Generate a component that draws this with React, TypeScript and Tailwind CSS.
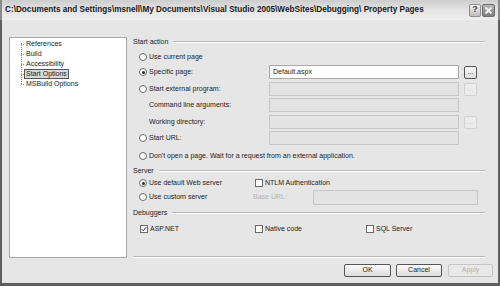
import React from "react";

function Radio({ checked }: { checked?: boolean }) {
  return (
    <span className="w-[8px] h-[8px] shrink-0 rounded-full border border-[#6a6a6a] bg-white flex items-center justify-center">
      {checked && <span className="w-[3px] h-[3px] rounded-full bg-[#2a2a2a]" />}
    </span>
  );
}

function Check({ checked }: { checked?: boolean }) {
  return (
    <span className="w-[8px] h-[8px] shrink-0 border border-[#6a6a6a] bg-white flex items-center justify-center">
      {checked && (
        <svg width="6" height="6" viewBox="0 0 6 6">
          <path d="M0.8 3.2 L2.3 4.7 L5.2 1.2" stroke="#222" strokeWidth="1" fill="none" />
        </svg>
      )}
    </span>
  );
}

function Field({ enabled, text, w = "w-[190px]" }: { enabled?: boolean; text?: string; w?: string }) {
  return (
    <div
      className={
        "h-[14px] flex items-center pl-[3px] " +
        w +
        (enabled ? " bg-white border border-[#a8a8a8]" : " bg-[#e3e3e3] border border-[#c6c6c6]")
      }
    >
      {text}
    </div>
  );
}

function Dots({ enabled }: { enabled?: boolean }) {
  return (
    <div
      className={
        "ml-[5px] w-[13px] h-[13px] rounded-[2px] flex items-end justify-center leading-none pb-[3px] " +
        (enabled
          ? "border border-[#555] bg-gradient-to-b from-[#fafafa] to-[#dedede] text-[#222]"
          : "border border-[#d0d0d0] bg-[#ececec] text-[#c0c0c0]")
      }
    >
      ...
    </div>
  );
}

function Header({ label }: { label: string }) {
  return (
    <div className="h-[10px] flex items-center">
      <span>{label}</span>
      <div className="flex-1 ml-[5px] border-t border-[#b9b9b9] border-b border-b-white" />
    </div>
  );
}

function Btn({ label, disabled, w }: { label: string; disabled?: boolean; w: string }) {
  return (
    <div
      className={
        "h-[13px] rounded-[2px] flex items-center justify-center " +
        w +
        (disabled
          ? " border border-[#c4c4c4] bg-[#e9e9e9] text-[#b0b0b0]"
          : " border border-[#555] bg-gradient-to-b from-[#fbfbfb] to-[#dcdcdc] text-[#1a1a1a]")
      }
    >
      {label}
    </div>
  );
}

export default function App() {
  const tree = ["References", "Build", "Accessibility", "Start Options", "MSBuild Options"];
  return (
    <div className="w-[500px] h-[286px] flex flex-col font-['Liberation_Sans',Arial,sans-serif] text-[7px] text-[#1c1c1c] overflow-hidden">
      {/* Title bar */}
      <div className="h-[20px] shrink-0 flex items-center pl-[3px] pr-[3px] bg-gradient-to-b from-[#cdcdcd] via-[#e4e4e4] to-[#efefef] border-x-[2px] border-[#8a8a8a]">
        <span className="font-bold text-[8.2px] text-[#1a1a1a] whitespace-nowrap">
          C:\Documents and Settings\msnell\My Documents\Visual Studio 2005\WebSites\Debugging\ Property Pages
        </span>
        <div className="flex-1" />
        <div className="w-[12px] h-[13px] rounded-[2px] border border-[#8c8c8c] bg-gradient-to-b from-[#f4f4f4] to-[#bdbdbd] flex items-center justify-center text-[9px] font-bold text-[#444] mr-[1px]">
          ?
        </div>
        <div className="w-[13px] h-[13px] rounded-[2px] border border-[#6d6d6d] bg-gradient-to-b from-[#b5b5b5] to-[#7d7d7d] flex items-center justify-center">
          <svg width="9" height="9" viewBox="0 0 9 9">
            <path d="M1.5 1.5 L7.5 7.5 M7.5 1.5 L1.5 7.5" stroke="#f4f4f4" strokeWidth="1.8" />
          </svg>
        </div>
      </div>

      {/* Body */}
      <div className="flex-1 flex flex-col bg-[#e6e6e6] border-x-[2px] border-b-[3px] border-[#5e5e5e]">
        <div className="flex pt-[17px] pl-[7px]">
          {/* Tree */}
          <div className="w-[118px] h-[221px] bg-white border border-[#a9a9a9] pt-[1px] relative">
            <div className="absolute left-[11px] top-[5px] h-[41px] border-l border-dotted border-[#8a8a8a]" />
            {tree.map((t) => (
              <div key={t} className="h-[10px] flex items-center pl-[11px]">
                <div className="w-[3px] border-t border-dotted border-[#8a8a8a]" />
                {t === "Start Options" ? (
                  <span className="h-[10px] flex items-center px-[1px] border border-[#555] bg-[#d9d9d9]">{t}</span>
                ) : (
                  <span className="px-[2px]">{t}</span>
                )}
              </div>
            ))}
          </div>

          {/* Right column */}
          <div className="ml-[6px] w-[352px] h-[221px] flex flex-col">
            <Header label="Start action" />
            <div className="mt-[3px] h-[14px] flex items-center pl-[6px] gap-[2px]">
              <Radio />
              <span>Use current page</span>
            </div>
            <div className="mt-[1px] h-[14px] flex items-center">
              <div className="w-[136px] flex items-center pl-[6px] gap-[2px]">
                <Radio checked />
                <span>Specific page:</span>
              </div>
              <Field enabled text="Default.aspx" />
              <Dots enabled />
            </div>
            <div className="mt-[3px] h-[14px] flex items-center">
              <div className="w-[136px] flex items-center pl-[6px] gap-[2px]">
                <Radio />
                <span>Start external program:</span>
              </div>
              <Field />
              <Dots />
            </div>
            <div className="mt-[2px] h-[14px] flex items-center">
              <div className="w-[136px] pl-[16px]">Command line arguments:</div>
              <Field />
            </div>
            <div className="mt-[3px] h-[14px] flex items-center">
              <div className="w-[136px] pl-[16px]">Working directory:</div>
              <Field />
              <Dots />
            </div>
            <div className="mt-[2px] h-[14px] flex items-center">
              <div className="w-[136px] flex items-center pl-[6px] gap-[2px]">
                <Radio />
                <span>Start URL:</span>
              </div>
              <Field />
            </div>
            <div className="mt-[4px] h-[14px] flex items-center pl-[6px] gap-[2px]">
              <Radio />
              <span>Don't open a page. Wait for a request from an external application.</span>
            </div>

            <div className="mt-[3px]">
              <Header label="Server" />
            </div>
            <div className="h-[14px] flex items-center">
              <div className="w-[122px] flex items-center pl-[6px] gap-[2px]">
                <Radio checked />
                <span>Use default Web server</span>
              </div>
              <Check />
              <span className="ml-[2px]">NTLM Authentication</span>
            </div>
            <div className="h-[14px] flex items-center">
              <div className="w-[120px] flex items-center pl-[6px] gap-[2px]">
                <Radio />
                <span>Use custom server</span>
              </div>
              <div className="w-[60px] text-[#b4b4b4]">Base URL:</div>
              <Field w="w-[165px] h-[15px]" />
            </div>

            <div className="mt-[4px]">
              <Header label="Debuggers" />
            </div>
            <div className="mt-[4px] h-[14px] flex items-center">
              <div className="w-[122px] flex items-center pl-[7px] gap-[2px]">
                <Check checked />
                <span>ASP.NET</span>
              </div>
              <div className="w-[111px] flex items-center gap-[2px]">
                <Check />
                <span>Native code</span>
              </div>
              <div className="flex items-center gap-[2px]">
                <Check />
                <span>SQL Server</span>
              </div>
            </div>

            <div className="mt-auto border-t border-[#b9b9b9] border-b border-b-white" />
          </div>
        </div>

        {/* Buttons */}
        <div className="mt-[6px] flex justify-end pr-[5px]">
          <Btn label="OK" w="w-[47px]" />
          <div className="w-[5px]" />
          <Btn label="Cancel" w="w-[46px]" />
          <div className="w-[6px]" />
          <Btn label="Apply" disabled w="w-[45px]" />
        </div>
      </div>
    </div>
  );
}
